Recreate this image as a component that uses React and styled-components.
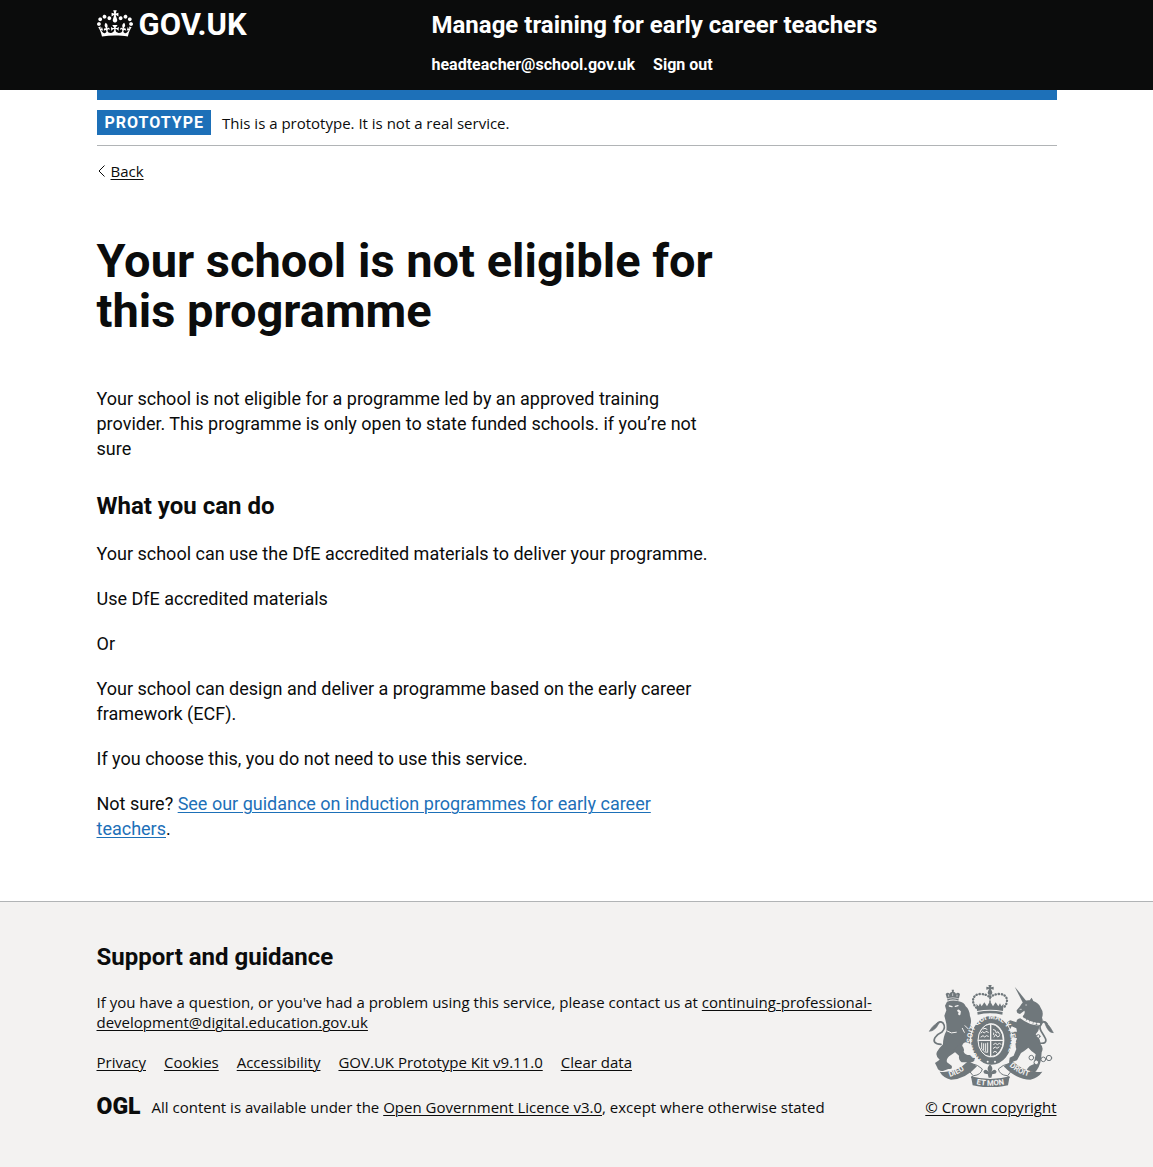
import React from 'react';
import styled, { createGlobalStyle, css } from 'styled-components';

const colour = {
  ink: '#0b0c0c',
  white: '#ffffff',
  blue: '#1d70b8',
  border: '#b1b4b6',
  canvas: '#f3f2f1',
  crest: '#6f777b',
};

const smallText = css`
  font-family: "Open Sans", "Noto Sans", sans-serif;
  font-size: 15px;
  line-height: 20px;
`;

const GlobalStyle = createGlobalStyle`
  html { background: ${colour.canvas}; }
  body {
    margin: 0;
    background: ${colour.white};
    color: ${colour.ink};
    font-family: Roboto, "Liberation Sans", Arial, sans-serif;
    -webkit-font-smoothing: antialiased;
  }
`;

const Container = styled.div`
  max-width: 960px;
  margin: 0 30px;

  @media (min-width: 1020px) {
    margin: 0 auto;
  }
`;

const Link = styled.a`
  color: ${p => (p.$tone === 'blue' ? colour.blue : colour.ink)};
  text-decoration: underline;
  text-decoration-thickness: 1px;
  text-underline-offset: 2px;

  &:hover { text-decoration-thickness: 3px; }
`;

/* Header */

const Header = styled.header`
  background: linear-gradient(${colour.ink}, ${colour.ink}) top / 100% calc(100% - 10px) no-repeat;
  color: ${colour.white};
`;

const HeaderInner = styled(Container)`
  display: grid;
  grid-template-columns: 1fr 2fr;
  padding-top: 10px;
  border-bottom: 10px solid ${colour.blue};
`;

const HomeLink = styled.a`
  display: flex;
  align-items: flex-start;
  align-self: start;
  gap: 6px;
  color: inherit;
  font-size: 31px;
  font-weight: 700;
  line-height: 30px;
  text-decoration: none;

  svg { display: block; flex: none; }
`;

const HeaderContent = styled.div`
  padding: 0 0 15px 15px;
`;

const ServiceName = styled.a`
  display: block;
  color: inherit;
  font-size: 24px;
  font-weight: 700;
  line-height: 30px;
  text-decoration: none;
`;

const LinkList = styled.ul`
  display: flex;
  flex-wrap: wrap;
  column-gap: 18px;
  margin: ${p => p.$margin};
  padding: 0;
  list-style: none;
  line-height: 20px;
`;

const NavLink = styled.a`
  color: inherit;
  font-size: 16px;
  font-weight: 700;
  text-decoration: none;

  &:hover { text-decoration: underline; }
`;

/* Banner and back link */

const PhaseBanner = styled.div`
  ${smallText}
  display: flex;
  align-items: center;
  gap: 11px;
  padding: 10px 0;
  border-bottom: 1px solid ${colour.border};
`;

const PhaseTag = styled.strong`
  padding: 3px 7px 2px 8px;
  background: ${colour.blue};
  color: ${colour.white};
  font-family: Roboto, sans-serif;
  font-size: 16px;
  font-weight: 700;
  letter-spacing: 1px;
  text-transform: uppercase;
`;

const BackRow = styled.div`
  ${smallText}
  display: flex;
  align-items: center;
  gap: 5px;
  margin-top: 15px;

  svg { display: block; }
`;

/* Main */

const Main = styled.main`
  padding: 55px 0 60px;
`;

const Column = styled.div`
  @media (min-width: 641px) {
    width: calc(66.66% - 15px);
  }
`;

const headingSize = {
  xl: css`
    margin: 0 0 50px;
    font-size: 47px;
    line-height: 50px;
  `,
  m: css`
    margin: 0 0 20px;
    font-size: 24px;
    line-height: 30px;
  `,
};

const Heading = styled.h2`
  font-family: Roboto, sans-serif;
  font-weight: 700;
  ${p => headingSize[p.$size]}
`;

const Paragraph = styled.p`
  margin: 0 0 20px;
  font-size: 18px;
  line-height: 25px;

  & + h2 { margin-top: 30px; }
  &:last-child { margin-bottom: 0; }
`;

/* Footer */

const Footer = styled.footer`
  ${smallText}
  padding: 40px 0 50px;
  border-top: 1px solid ${colour.border};
  background: ${colour.canvas};
`;

const FooterMeta = styled.div`
  display: flex;
  flex-wrap: wrap;
  align-items: flex-end;
  gap: 30px;
`;

const FooterText = styled.div`
  flex: 1 1 480px;
`;

const Support = styled.p`
  margin: 0;
`;

const Licence = styled.p`
  display: flex;
  align-items: center;
  gap: 11px;
  margin: 0;
`;

const OglMark = styled.span`
  font-family: Roboto, sans-serif;
  font-size: 23px;
  font-weight: 900;
  line-height: 20px;
`;

const Copyright = styled(Link)`
  display: flex;
  flex-direction: column;
  align-items: center;
  gap: 10px;
  white-space: nowrap;

  svg { display: block; }
`;

function Crown() {
  return (
    <svg width="36" height="27" viewBox="0 0 132 97" aria-hidden="true">
      <path
        fill="currentColor"
        fillRule="evenodd"
        d="M25 30.2c3.5 1.5 7.7-.2 9.1-3.7 1.5-3.6-.2-7.8-3.9-9.2-3.6-1.4-7.6.3-9.1 3.9-1.4 3.5.3 7.5 3.9 9zM9 39.5c3.6 1.5 7.8-.2 9.2-3.7 1.5-3.6-.2-7.8-3.9-9.1-3.6-1.5-7.6.2-9.1 3.8-1.4 3.5.3 7.5 3.8 9zM4.4 57.2c3.5 1.5 7.7-.2 9.1-3.8 1.5-3.6-.2-7.7-3.9-9.1-3.5-1.5-7.6.3-9.1 3.8-1.4 3.5.3 7.6 3.9 9.1zm38.3-21.4c3.5 1.5 7.7-.2 9.1-3.8 1.5-3.6-.2-7.7-3.9-9.1-3.6-1.5-7.6.3-9.1 3.8-1.3 3.6.4 7.7 3.9 9.1zm64.4-5.6c-3.6 1.5-7.8-.2-9.1-3.7-1.5-3.6.2-7.8 3.8-9.2 3.6-1.4 7.7.3 9.2 3.9 1.3 3.5-.4 7.5-3.9 9zm15.9 9.3c-3.6 1.5-7.7-.2-9.1-3.7-1.5-3.6.2-7.8 3.7-9.1 3.6-1.5 7.7.2 9.2 3.8 1.5 3.5-.3 7.5-3.8 9zm4.7 17.7c-3.6 1.5-7.8-.2-9.2-3.8-1.5-3.6.2-7.7 3.9-9.1 3.6-1.5 7.7.3 9.2 3.8 1.3 3.5-.4 7.6-3.9 9.1zM89.3 35.8c-3.6 1.5-7.8-.2-9.2-3.8-1.4-3.6.2-7.7 3.9-9.1 3.6-1.5 7.7.3 9.2 3.8 1.4 3.6-.3 7.7-3.9 9.1zM69.7 17.7l8.9 4.7V9.3l-8.9 2.8c-.2-.3-.5-.6-.9-.9L72.4 0H59.6l3.5 11.2c-.3.3-.6.5-.9.9l-8.8-2.8v13.1l8.8-4.7c.3.3.6.7.9.9l-5 15.4v.1c-.2.8-.4 1.6-.4 2.4 0 4.1 3.1 7.5 7 8.1h.2c.3 0 .7.1 1 .1.4 0 .7 0 1-.1h.2c4-.6 7.1-4.1 7.1-8.1 0-.8-.1-1.7-.4-2.4V34l-5.1-15.4c.4-.2.7-.6 1-.9zM66 92.8c16.9 0 32.8 1.1 47.1 3.2 4-16.9 8.9-26.7 14-33.5l-9.6-3.4c1 4.9 1.1 7.2 0 10.2-1.5-1.4-3-4.3-4.2-8.7L108.6 76c2.8-2 5-3.2 7.5-3.3-4.4 9.4-10 11.9-13.6 11.2-4.3-.8-6.3-4.6-5.6-7.9 1-4.7 5.7-5.9 8-.5 4.3-8.7-3-11.4-7.6-8.8 7.1-7.2 7.9-13.5 2.1-21.1-8 6.1-8.1 12.3-4.5 20.8-4.7-5.4-12.1-2.5-9.5 6.2 3.4-5.2 7.9-2 7.2 3.1-.6 4.3-6.4 7.8-13.5 7.2-10.3-.9-10.9-8-11.2-13.8 2.5-.5 7.1 1.8 11 7.3L80.2 60c-4.1 4.4-8 5.3-12.3 5.4 1.4-4.4 8-11.6 8-11.6H55.5s6.4 7.2 7.9 11.6c-4.2-.1-8-1-12.3-5.4l1.4 16.4c3.9-5.5 8.5-7.7 10.9-7.3-.3 5.8-.9 12.8-11.1 13.8-7.2.6-12.9-2.9-13.5-7.2-.7-5 3.8-8.3 7.1-3.1 2.7-8.7-4.6-11.6-9.4-6.2 3.7-8.5 3.6-14.7-4.6-20.8-5.8 7.6-5 13.9 2.2 21.1-4.7-2.6-11.9.1-7.7 8.8 2.3-5.5 7.1-4.2 8.1.5.7 3.3-1.3 7.1-5.7 7.9-3.5.7-9-1.8-13.5-11.2 2.5.1 4.7 1.3 7.5 3.3l-4.7-15.4c-1.2 4.4-2.7 7.2-4.3 8.7-1.1-3-.9-5.3 0-10.2l-9.5 3.4c5 6.9 9.9 16.7 14 33.5 14.8-2.1 30.8-3.2 47.7-3.2z"
      />
    </svg>
  );
}

function RoyalArms() {
  const dark = colour.crest;
  const light = colour.canvas;
  return (
    <svg width="126" height="103" viewBox="39 27 378 309" aria-hidden="true">
      <g fill={dark} stroke="none">
        {/* lion: crown, mane and head, body, limbs */}
        <path d="M98 77 L92 57 Q98 50 104 56 Q106 50 111 51 L110 44 h7 l-1 7 Q120 50 123 56 Q129 50 135 57 L130 77 Q113 70 98 77Z" />
        <path d="M96 80 Q114 73 131 79 Q148 82 152 94 Q164 104 165 124 Q171 136 166 150 L178 166 Q168 186 174 210 L160 204 Q150 198 144 206 L140 216 Q124 230 108 240 Q92 250 96 262 L110 272 Q114 284 100 282 L84 288 Q70 290 66 276 L60 264 L74 254 Q60 244 66 230 Q74 218 84 208 Q84 186 94 168 Q96 150 92 138 L88 122 L94 106 L90 92Z" />
        <path d="M138 174 Q152 166 166 172 L178 188 L168 194 L156 190 L146 196Z" />
        <path d="M134 206 Q150 216 146 230 Q150 240 164 240 L180 250 Q180 264 162 262 L140 262 Q130 254 132 242 L114 226Z" />
        {/* unicorn: horn, head, neck, body, legs */}
        <path d="M299 35 L334 78 L325 86Z" />
        <path d="M320 86 Q330 74 344 76 L350 68 L355 78 Q372 84 377 98 Q387 112 381 128 Q387 142 378 154 L364 150 L330 136 L323 124 Q332 114 328 107 L315 117 Q304 116 305 106 L314 95Z" />
        <path d="M316 130 Q344 152 374 152 Q372 168 362 178 Q376 190 377 208 Q387 218 380 232 L378 254 Q374 276 360 292 L334 288 Q340 272 356 268 L362 238 Q350 230 340 218 Q328 228 318 234 L306 256 L282 264 L284 248 L296 242 L304 222 Q298 206 306 190 L294 186 L284 194 L274 182 L290 170 L306 170 L304 160 L290 154 L284 166 L272 160 Q272 140 286 136 L304 142 Q304 132 316 130Z" />
        {/* crown above the garter */}
        <path d="M220 30 h10 l-2 7 l8 -2 v9 l-8 -2 l2 7 h-10 l2 -7 l-8 2 v-9 l8 2Z" />
        <circle cx="225" cy="53" r="7" />
        <path d="M184 86 l7 8 l4 -9 l5 9 l8 -12 l8 12 l4 -7 l5 -9 l5 9 l4 7 l8 -12 l8 12 l5 -9 l4 9 l7 -8 L264 108 Q225 100 186 108Z" />
        <path d="M187 111 Q225 103 263 111 L262 119 Q225 111 188 119Z" />
      </g>

      <g fill="none" stroke={dark} strokeWidth="7" strokeLinecap="round">
        <path strokeDasharray="1 8" d="M184 98 C166 80 174 57 196 57 C210 57 220 62 225 68 C230 62 240 57 254 57 C276 57 284 80 266 98" />
        <path strokeWidth="5" strokeDasharray="1 7" d="M225 62 V84" />
        {/* tails */}
        <path strokeWidth="5" d="M78 208 Q50 206 60 188 Q66 178 80 172 Q94 158 84 144 Q74 136 66 146" />
        <path d="M76 140 Q56 146 43 169 Q60 168 70 148Z" fill={dark} strokeWidth="2" />
        <path strokeWidth="5" d="M372 204 Q396 208 392 192 Q386 180 378 168 Q370 152 382 142 Q390 138 396 146" />
        <path d="M386 138 Q398 142 415 173 Q400 174 390 146Z" fill={dark} strokeWidth="2" />
        {/* chain */}
        <g strokeWidth="3">
          <circle cx="370" cy="184" r="5" fill={light} />
          <circle cx="349" cy="248" r="7" fill={light} />
          <circle cx="364" cy="262" r="7" fill={light} />
          <circle cx="385" cy="253" r="7" fill={light} />
          <circle cx="402" cy="249" r="8" />
        </g>
      </g>

      {/* features cut out of the supporters */}
      <g fill="none" stroke={light} strokeLinecap="round">
        <path strokeWidth="4" d="M103 93 l8 2 M121 94 l8 -2" />
        <path strokeWidth="7" d="M130 107 l4 3 l-1 7" />
        <path strokeWidth="3" d="M96 168 Q108 178 124 172 M150 152 l10 10 M142 160 l6 12" />
        <path strokeWidth="6" strokeDasharray="4 7" d="M318 126 Q342 144 374 147" />
        <path strokeWidth="2" d="M315 103 h4 M332 90 h3" />
        <path strokeWidth="2" d="M96 71 Q113 65 131 71 M101 60 v4 M113 56 v6 M126 60 v4" />
      </g>

      {/* garter and shield */}
      <ellipse cx="229" cy="196" rx="64" ry="76" fill={light} />
      <ellipse cx="229" cy="196" rx="50" ry="62" fill="none" stroke={dark} strokeWidth="22" />
      <ellipse cx="227" cy="196" rx="37" ry="48" fill={dark} />
      <ellipse cx="227" cy="196" rx="38" ry="49" fill="none" stroke={light} strokeWidth="3" />
      <defs>
        <path id="garter-line" d="M199 253 C162 226 162 166 198 142 C218 129 240 129 260 142 C296 166 296 226 259 253" />
        <path id="ribbon-left" d="M104 306 Q136 298 172 265" />
        <path id="ribbon-foot" d="M172 325 Q226 339 280 325" />
        <path id="ribbon-right" d="M283 273 Q312 300 350 306" />
      </defs>
      <g fill="none" stroke={light} strokeLinecap="round">
        <path strokeWidth="4" d="M227 148 V244 M190 196 H264" />
        <path strokeWidth="3" d="M198 174 l5 -4 l5 4 l5 -5 l7 3 M198 186 l6 -4 l5 4 l5 -4 l6 2 M204 162 l6 -2 l6 3" />
        <path strokeWidth="3" d="M235 164 l6 2 l3 8 l5 -4 l5 8 M237 186 l5 -8 l6 8 l6 -4 M236 174 v5" />
        <path strokeWidth="3" d="M200 204 V222 Q208 234 218 232 V204 M206 206 V224 M212 206 V228" />
        <path strokeWidth="3" d="M236 208 l6 -3 l5 4 l6 -4 l5 3 M235 220 l6 -4 l5 4 l6 -4 M235 232 l5 -3 l5 3" />
      </g>
      <circle cx="218" cy="260" r="3" fill={light} />
      <circle cx="240" cy="260" r="3" fill={light} />

      {/* motto ribbon */}
      <g fill={dark}>
        <path d="M74 290 Q122 296 160 258 L186 274 Q150 314 108 314 Q84 308 74 290Z" />
        <path d="M382 290 Q332 296 292 258 L266 274 Q304 314 346 314 Q370 308 382 290Z" />
        <path d="M168 304 Q226 320 284 304 L279 331 Q226 343 173 331Z" />
        <path d="M225 268 Q237 280 229 290 Q240 278 245 290 Q243 299 232 297 L229 308 h-8 L218 297 Q207 299 205 290 Q210 278 221 290 Q213 280 225 268Z" />
      </g>
      <path
        fill="none"
        stroke={dark}
        strokeWidth="3"
        d="M164 264 Q192 270 202 282 Q198 300 176 302 L168 308 M160 284 L174 302 M288 264 Q260 270 250 282 Q254 300 276 302 L284 308 M292 284 L278 302"
      />
      <g fill={light} fontFamily="Roboto, sans-serif" fontWeight="700" fontSize="23">
        <text fontSize="22"><textPath href="#garter-line">HONI SOIT QUI MAL Y PENSE</textPath></text>
        <text><textPath href="#ribbon-left">DIEU</textPath></text>
        <text><textPath href="#ribbon-foot" startOffset="50%" textAnchor="middle">ET MON</textPath></text>
        <text><textPath href="#ribbon-right">DROIT</textPath></text>
      </g>
    </svg>
  );
}

const footerLinks = ['Privacy', 'Cookies', 'Accessibility', 'GOV.UK Prototype Kit v9.11.0', 'Clear data'];

export default function App() {
  return (
    <>
      <GlobalStyle />
      <Header>
        <HeaderInner>
          <HomeLink href="#">
            <Crown />
            GOV.UK
          </HomeLink>
          <HeaderContent>
            <ServiceName href="#">Manage training for early career teachers</ServiceName>
            <nav>
              <LinkList $margin="15px 0 0">
                <li><NavLink href="#">headteacher@school.gov.uk</NavLink></li>
                <li><NavLink href="#">Sign out</NavLink></li>
              </LinkList>
            </nav>
          </HeaderContent>
        </HeaderInner>
      </Header>

      <Container>
        <PhaseBanner>
          <PhaseTag>Prototype</PhaseTag>
          <span>This is a prototype. It is not a real service.</span>
        </PhaseBanner>
        <BackRow>
          <svg width="9" height="12" viewBox="0 0 9 12" aria-hidden="true">
            <path d="M7.5 0.5 L2 6 L7.5 11.5" fill="none" stroke={colour.ink} strokeWidth="1" />
          </svg>
          <Link href="#">Back</Link>
        </BackRow>

        <Main>
          <Column>
            <Heading as="h1" $size="xl">Your school is not eligible for this programme</Heading>
            <Paragraph>
              Your school is not eligible for a programme led by an approved training provider. This
              programme is only open to state funded schools. if you’re not sure
            </Paragraph>
            <Heading $size="m">What you can do</Heading>
            <Paragraph>Your school can use the DfE accredited materials to deliver your programme.</Paragraph>
            <Paragraph>Use DfE accredited materials</Paragraph>
            <Paragraph>Or</Paragraph>
            <Paragraph>
              Your school can design and deliver a programme based on the early career framework (ECF).
            </Paragraph>
            <Paragraph>If you choose this, you do not need to use this service.</Paragraph>
            <Paragraph>
              Not sure?{' '}
              <Link href="#" $tone="blue">See our guidance on induction programmes for early career teachers</Link>.
            </Paragraph>
          </Column>
        </Main>
      </Container>

      <Footer>
        <Container>
          <FooterMeta>
            <FooterText>
              <Heading $size="m">Support and guidance</Heading>
              <Support>
                If you have a question, or you've had a problem using this service, please contact us at{' '}
                <Link href="#">continuing-professional-development@digital.education.gov.uk</Link>
              </Support>
              <LinkList $margin="20px 0 25px">
                {footerLinks.map(label => (
                  <li key={label}><Link href="#">{label}</Link></li>
                ))}
              </LinkList>
              <Licence>
                <OglMark>OGL</OglMark>
                <span>
                  All content is available under the{' '}
                  <Link href="#">Open Government Licence v3.0</Link>, except where otherwise stated
                </span>
              </Licence>
            </FooterText>
            <Copyright href="#">
              <RoyalArms />
              © Crown copyright
            </Copyright>
          </FooterMeta>
        </Container>
      </Footer>
    </>
  );
}
